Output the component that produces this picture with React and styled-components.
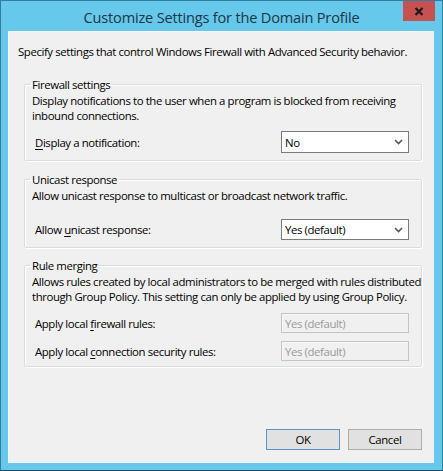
import React from "react";
import styled, { createGlobalStyle } from "styled-components";

const Global = createGlobalStyle`
  html, body { margin: 0; padding: 0; background: #ffffff; }
  body { font-family: "Open Sans", "Noto Sans", sans-serif; }
`;

const Window = styled.div`
  box-sizing: border-box;
  width: 443px;
  height: 471px;
  border: 1px solid #2f7f9e;
  border-bottom-color: #23495a;
  background: #66c8ea;
  display: flex;
  flex-direction: column;
`;

const TitleBar = styled.div`
  position: relative;
  height: 30px;
  flex: none;
  display: flex;
  align-items: center;
  justify-content: center;
`;

const Title = styled.div`
  font-family: "Open Sans", "Noto Sans", sans-serif;
  font-size: 14.6px;
  color: #1b3646;
  letter-spacing: -0.2px;
  margin-top: 1px;
`;

const CloseButton = styled.div`
  position: absolute;
  top: 0;
  right: 7px;
  width: 32px;
  height: 20px;
  background: #c75050;
  display: flex;
  align-items: center;
  justify-content: center;
`;

const Client = styled.div`
  flex: 1;
  margin: 0 8px 7px 7px;
  background: #f0f0f0;
  box-shadow: inset 1px 1px 0 #f7f7f7;
  display: flex;
  flex-direction: column;
  padding: 13px 0 13px 0;
  color: #000;
  font-size: 11.4px;
  letter-spacing: -0.4px;
`;

const Intro = styled.div`
  line-height: 15px;
  padding-left: 10px;
  white-space: nowrap;
`;

const Group = styled.fieldset`
  margin: ${(p) => p.$top}px 12px 0 16px;
  padding: 0 12px ${(p) => p.$bottom}px 7px;
  border: 1px solid #dcdcdc;
  border-radius: 2px;
  box-shadow: inset 1px 1px 0 #ffffff, 1px 1px 0 #ffffff;
  min-width: 0;
`;

const Legend = styled.legend`
  padding: 0 2px;
  margin-left: -2px;
  line-height: 15px;
`;

const Desc = styled.div`
  line-height: 15px;
  margin-top: 1px;
  white-space: pre;
`;

const Row = styled.div`
  display: flex;
  align-items: center;
  justify-content: space-between;
  margin-top: ${(p) => p.$top}px;
`;

const Label = styled.span`
  padding-left: 3px;
`;

const Mn = styled.span`
  text-decoration: underline;
  text-underline-offset: 2px;
`;

const Combo = styled.div`
  box-sizing: border-box;
  width: 128px;
  height: ${(p) => p.$h}px;
  background: #ffffff;
  border: 1px solid #7a7a7a;
  display: flex;
  align-items: center;
  justify-content: space-between;
  padding: 0 5px 0 3px;
`;

const Field = styled.div`
  box-sizing: border-box;
  width: 128px;
  height: 20px;
  background: #f0f0f0;
  border: 1px solid #c4c4c4;
  box-shadow: inset 1px 1px 0 #f7f7f7;
  color: #9a9a9a;
  display: flex;
  align-items: center;
  padding-left: 3px;
`;

const Footer = styled.div`
  margin-top: auto;
  display: flex;
  justify-content: flex-end;
  gap: 8px;
  padding-right: 12px;
`;

const Button = styled.div`
  box-sizing: border-box;
  width: 74px;
  height: 21px;
  background: #e1e1e1;
  border: 1px solid ${(p) => (p.$default ? "#5e93c2" : "#adadad")};
  display: flex;
  align-items: center;
  justify-content: center;
`;

const Chevron = () => (
  <svg width="9" height="6" viewBox="0 0 9 6">
    <path d="M1 1 L4.5 4.5 L8 1" fill="none" stroke="#555" strokeWidth="1.6" />
  </svg>
);

const CloseIcon = () => (
  <svg width="10" height="9" viewBox="0 0 10 9">
    <path d="M1.5 1 L8.5 8 M8.5 1 L1.5 8" stroke="#1a1a1a" strokeWidth="2.2" />
  </svg>
);

export default function App() {
  return (
    <>
      <Global />
      <Window>
        <TitleBar>
          <Title>Customize Settings for the Domain Profile</Title>
          <CloseButton>
            <CloseIcon />
          </CloseButton>
        </TitleBar>
        <Client>
          <Intro>Specify settings that control Windows Firewall with Advanced Security behavior.</Intro>

          <Group $top={18} $bottom={7}>
            <Legend>Firewall settings</Legend>
            <Desc>{"Display notifications to the user when a program is blocked from receiving\ninbound connections."}</Desc>
            <Row $top={8}>
              <Label>
                <Mn>D</Mn>isplay a notification:
              </Label>
              <Combo $h={22}>
                <span>No</span>
                <Chevron />
              </Combo>
            </Row>
          </Group>

          <Group $top={11} $bottom={7}>
            <Legend>Unicast response</Legend>
            <Desc>Allow unicast response to multicast or broadcast network traffic.</Desc>
            <Row $top={16}>
              <Label>
                Allow <Mn>u</Mn>nicast response:
              </Label>
              <Combo $h={21}>
                <span>Yes (default)</span>
                <Chevron />
              </Combo>
            </Row>
          </Group>

          <Group $top={10} $bottom={5}>
            <Legend>Rule merging</Legend>
            <Desc>{"Allows rules created by local administrators to be merged with rules distributed\nthrough Group Policy. This setting can only be applied by using Group Policy."}</Desc>
            <Row $top={9}>
              <Label>
                Apply local <Mn>f</Mn>irewall rules:
              </Label>
              <Field>Yes (default)</Field>
            </Row>
            <Row $top={8}>
              <Label>
                Apply local <Mn>c</Mn>onnection security rules:
              </Label>
              <Field>Yes (default)</Field>
            </Row>
          </Group>

          <Footer>
            <Button $default>OK</Button>
            <Button>Cancel</Button>
          </Footer>
        </Client>
      </Window>
    </>
  );
}
